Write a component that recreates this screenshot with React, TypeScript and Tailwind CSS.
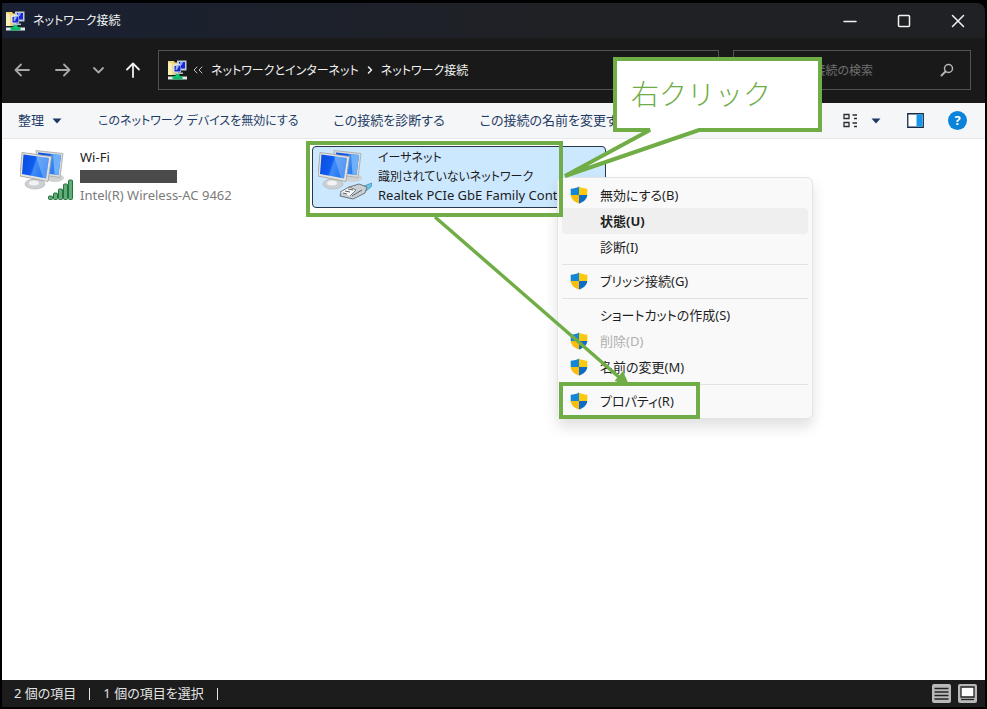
import React from "react";

function NetworkFolderIcon() {
  return (
    <svg width="19" height="20" viewBox="0 0 19 20" aria-hidden="true" className="shrink-0">
      <path d="M0 1h6l1 1.500h3V15H0z" fill="#f0d878" />
      <path d="M0 2.500l4 1V15H0z" fill="#fbf0b4" />
      <path d="M9 .5h9.500v10H9z" fill="#c3cbd8" />
      <path d="M11 2h6v6.500h-6z" fill="#1626d8" />
      <path d="M5 4.500l8-1v9H5z" fill="#dfe4ec" />
      <path d="M6.500 6l6-.5v6h-6z" fill="#1424c8" />
      <path d="M8 6h3l-2 4H7.500z" fill="#8fb2ff" />
      <path d="M12 2l3 0-1 3h-2z" fill="#7ea2ff" />
      <path d="M6 12.500h9V14H6z" fill="#b8bec8" />
      <path d="M0 16.500h19v3H0z" fill="#e6e9ec" />
      <path d="M4.500 16h10v3.500h-10z" fill="#12b76a" />
      <path d="M7.500 14h4v3h-4z" fill="#12c873" />
    </svg>
  );
}

function Shield() {
  return (
    <svg width="18" height="18" viewBox="0 0 18 18" aria-hidden="true" className="shrink-0">
      <path d="M9 .5C6.800 2 4 2.600.7 2.700V9H9z" fill="#1187d6" />
      <path d="M9 .5c2.200 1.500 5 2.100 8.300 2.200V9H9z" fill="#fdc90f" />
      <path d="M.7 9c.3 4.200 3.600 6.800 8.300 8.600V9z" fill="#fbbd0c" />
      <path d="M17.300 9c-.3 4.200-3.600 6.800-8.300 8.600V9z" fill="#0f6cc4" />
    </svg>
  );
}

function Monitors({ kind }: { kind: "wifi" | "ethernet" }) {
  const id = "screen-" + kind;
  return (
    <svg width="54" height="54" viewBox="0 0 54 54" aria-hidden="true" className="shrink-0">
      <defs>
        <linearGradient id={id} x1="0" y1="0" x2="1" y2="0.3">
          <stop offset="0" stopColor="#0a4be0" />
          <stop offset="0.5" stopColor="#0f5cf0" />
          <stop offset="0.58" stopColor="#3f8cf8" />
          <stop offset="1" stopColor="#1f74f0" />
        </linearGradient>
      </defs>
      <ellipse cx="35" cy="28" rx="9" ry="4" fill="#cfd1d3" />
      <path d="M16 .5l27 3-3 24-22-3z" fill="#d9dcdb" stroke="#a5a7a3" strokeWidth="0.800" />
      <path d="M18 2.500l23 2.500-2.500 20-18-2z" fill={"url(#" + id + ")"} />
      <path d="M33 4.200l8 .8-2.500 20-4-.5z" fill="#6fb0fa" />
      <path d="M12 27l9 2v6h-8z" fill="#b4b7b9" />
      <ellipse cx="15" cy="34" rx="10" ry="5" fill="#cdd0d2" stroke="#aeb1b3" strokeWidth="0.600" />
      <ellipse cx="14" cy="33" rx="5" ry="2.500" fill="#f1f2f3" />
      <path d="M2 2.500l29.500 4L28 31.500 0 26z" fill="#e4e5e2" stroke="#9d9e99" strokeWidth="0.800" />
      <path d="M3.500 4.500L29 8l-3 20.500L2 24z" fill={"url(#" + id + ")"} />
      <path d="M16 6.200L29 8l-3 20.500-3-.6z" fill="#a9cffb" opacity="0.400" />
      {kind === "wifi" ? (
        <g fill="#5fae78" stroke="#26713f" strokeWidth="1">
          <rect x="28.500" y="46" width="4" height="3.500" rx="1" />
          <rect x="33.500" y="43" width="4" height="6.500" rx="1" />
          <rect x="38.500" y="39" width="4" height="10.500" rx="1" />
          <rect x="43.500" y="34" width="4" height="15.500" rx="1" />
          <rect x="48.500" y="30" width="4" height="19.500" rx="1" />
        </g>
      ) : (
        <g strokeLinejoin="round">
          <path d="M54 33l-8 3-2 3 4 2 6-5z" fill="#6cc4e6" stroke="#3d93b8" strokeWidth="0.800" />
          <path d="M31 37l10-3 8 3-2 6-12 6-13-3 1-4z" fill="#c9cfd3" stroke="#6d767c" strokeWidth="1" />
          <path d="M22 42l9-5 7 3-6 6" fill="#f5f6f7" stroke="#6d767c" strokeWidth="0.900" />
          <path d="M25 43l4 1m-2-3l5 1m-2-3l5 1m-1 6l10-6" stroke="#5b646a" strokeWidth="1" fill="none" />
        </g>
      )}
    </svg>
  );
}

const strokeIcon = {
  fill: "none",
  stroke: "currentColor",
  strokeWidth: 1.5,
  strokeLinecap: "round" as const,
  strokeLinejoin: "round" as const,
};

function NavButton({ label, d, bright }: { label: string; d: string; bright?: boolean }) {
  return (
    <button aria-label={label} className={bright ? "text-[#f0f0f0]" : "text-[#a8a8a8]"}>
      <svg width="16" height="16" viewBox="0 0 16 16" {...strokeIcon} strokeWidth={1.8}>
        <path d={d} />
      </svg>
    </button>
  );
}

function Caret() {
  return (
    <svg width="10" height="6" viewBox="0 0 10 6" aria-hidden="true">
      <path d="M.5.500h9L5 5.500z" fill="#1b3a63" />
    </svg>
  );
}

type MenuEntry = { label: string; shield?: boolean; bold?: boolean; disabled?: boolean } | "separator";

const menu: MenuEntry[] = [
  { label: "無効にする(B)", shield: true },
  { label: "状態(U)", bold: true },
  { label: "診断(I)" },
  "separator",
  { label: "ブリッジ接続(G)", shield: true },
  "separator",
  { label: "ショートカットの作成(S)" },
  { label: "削除(D)", shield: true, disabled: true },
  { label: "名前の変更(M)", shield: true },
  "separator",
  { label: "プロパティ(R)", shield: true },
];

function ContextMenu() {
  return (
    <div
      role="menu"
      className="absolute left-[557px] top-[177px] w-64 rounded-md border border-[#e4e4e4] bg-[#f9f9f9] p-1 shadow-[0_8px_14px_rgba(0,0,0,0.12)]"
    >
      {menu.map((entry, i) =>
        entry === "separator" ? (
          <div key={i} role="separator" className="flex h-2 items-center">
            <div className="h-px w-full bg-[#e2e2e2]" />
          </div>
        ) : (
          <button
            key={i}
            role="menuitem"
            disabled={entry.disabled}
            className={
              "flex h-[26px] w-full items-center rounded pl-2 text-left " +
              (entry.bold ? "bg-[#efefef] font-bold " : "") +
              (entry.disabled ? "text-[#b0b0b0]" : "text-[#1f1f1f]")
            }
          >
            <span className="w-[30px]">{entry.shield && <Shield />}</span>
            {entry.label}
          </button>
        )
      )}
    </div>
  );
}

function Annotations() {
  return (
    <div className="pointer-events-none absolute left-0 top-0 h-full w-full">
      <div className="absolute left-[306px] top-[141px] h-[76px] w-[257px] border-4 border-[#70ad47]" />
      <div className="absolute left-[559px] top-[382px] h-[37px] w-[141px] border-4 border-[#70ad47]" />
      <svg width="987" height="709" viewBox="0 0 987 709" className="absolute left-0 top-0" aria-hidden="true">
        <path
          d="M615 59H820V130H699L565 176L650 130H615z"
          fill="#fff"
          stroke="#70ad47"
          strokeWidth="4"
        />
        <path d="M435 217L620 378" stroke="#70ad47" strokeWidth="3.500" />
        <path d="M629 385L614.500 381L623 371z" fill="#70ad47" />
      </svg>
      <p className="absolute left-[631px] top-[74px] text-[28px] font-light leading-10 text-[#70ad47] [font-feature-settings:normal]">
        右クリック
      </p>
    </div>
  );
}

export default function App() {
  return (
    <div className="relative flex h-screen w-full flex-col overflow-hidden border-2 border-t-3 border-black bg-black font-['Noto_Sans','Noto_Sans_CJK_JP',sans-serif] text-[13px] leading-[19px] [font-feature-settings:'palt']">
      <header className="flex h-[35px] shrink-0 items-center rounded-tr-lg bg-linear-to-r from-[#192032] to-[#202124] to-60% pl-1 text-[#f2f2f2]">
        <NetworkFolderIcon />
        <h1 className="ml-2 flex-1 text-[12px]">ネットワーク接続</h1>
        <div className="flex items-center gap-10 pr-5">
          <button aria-label="最小化">
            <svg width="14" height="14" viewBox="0 0 14 14" {...strokeIcon}>
              <path d="M1 7.500h12" />
            </svg>
          </button>
          <button aria-label="最大化">
            <svg width="14" height="14" viewBox="0 0 14 14" {...strokeIcon}>
              <rect x="1.500" y="1.500" width="11" height="11" rx="1" />
            </svg>
          </button>
          <button aria-label="閉じる">
            <svg width="14" height="14" viewBox="0 0 14 14" {...strokeIcon}>
              <path d="M1.500 1.500l11 11M12.500 1.500l-11 11" />
            </svg>
          </button>
        </div>
      </header>

      <nav className="flex h-[65px] shrink-0 items-center bg-[#191919] pb-px pl-3 pr-[14px] text-[12px] text-[#f0f0f0]">
        <div className="flex w-36 items-center">
          <div className="flex w-[41px]"><NavButton label="戻る" d="M15 8H1.500M7 2.500L1.500 8 7 13.500" /></div>
          <div className="flex w-[35px]"><NavButton label="進む" d="M1 8h13.500M9 2.500L14.500 8 9 13.500" /></div>
          <div className="flex w-[35px]"><NavButton label="最近の場所" d="M4 6l4.500 4.500L13 6" /></div>
          <NavButton label="上へ" d="M8 15V1.500M2 7.500l6-6 6 6" bright />
        </div>
        <div className="flex h-10 flex-1 items-center border border-[#535353] pl-[9px]">
          <NetworkFolderIcon />
          <svg width="10" height="8" viewBox="0 0 10 8" {...strokeIcon} strokeWidth={1} className="ml-[6px] text-[#c0c0c0]" aria-hidden="true">
            <path d="M4 1L1 4l3 3M9 1L6 4l3 3" />
          </svg>
          <button className="ml-2">ネットワークとインターネット</button>
          <svg width="6" height="8" viewBox="0 0 6 8" {...strokeIcon} className="mx-2" aria-hidden="true">
            <path d="M1.500 1l3 3-3 3" />
          </svg>
          <button>ネットワーク接続</button>
        </div>
        <label className="ml-[14px] flex h-10 w-[238px] items-center border border-[#535353] pl-4 pr-4">
          <input
            type="search"
            aria-label="検索"
            placeholder="ネットワーク接続の検索"
            className="w-0 flex-1 bg-transparent outline-none placeholder:text-[#6f6f6f]"
          />
          <svg width="14" height="14" viewBox="0 0 14 14" {...strokeIcon} className="text-[#b4b4b4]" aria-hidden="true">
            <circle cx="8.500" cy="5.500" r="4" />
            <path d="M5.500 8.500L1.500 12.500" strokeWidth="2" />
          </svg>
        </label>
      </nav>

      <div className="flex h-9 shrink-0 items-center border-b border-[#e6e8eb] bg-[#f5f6f8] pl-4 pr-[18px] text-[#1f3c66]">
        <button className="flex items-center gap-2">
          整理
          <Caret />
        </button>
        <div className="ml-9 flex flex-1 gap-[35px] whitespace-nowrap">
          <button className="text-[12px]">このネットワーク デバイスを無効にする</button>
          <button>この接続を診断する</button>
          <button>この接続の名前を変更する</button>
        </div>
        <button aria-label="表示" className="flex items-center gap-[13px]">
          <svg width="15" height="15" viewBox="0 0 15 15" fill="none" stroke="#2c2c2c" strokeWidth="1.300" aria-hidden="true">
            <path d="M1 1.500h5v4H1zM1 9.500h5v4H1zM9.500 2H14M11 5.500h3M9.500 10H14M11 13.500h3" />
          </svg>
          <Caret />
        </button>
        <button aria-label="プレビュー" className="ml-[26px]">
          <svg width="17" height="15" viewBox="0 0 17 15">
            <path d="M.75.750h15.500v13.500H.75z" fill="#fff" stroke="#152a48" strokeWidth="1.300" />
            <path d="M9.500 1.500h6v12h-6z" fill="#1596ec" />
          </svg>
        </button>
        <button
          aria-label="ヘルプ"
          className="ml-6 size-[19px] rounded-full bg-[#0b83da] text-center font-bold text-white"
        >
          ?
        </button>
      </div>

      <main className="grid flex-1 grid-cols-[294px_294px] content-start gap-1 bg-white pl-3 pt-[7px] text-[#1c1c1c]">
        <article className="flex h-[62px] border border-transparent pl-[5px] pt-[3px]">
          <Monitors kind="wifi" />
          <div className="ml-[6px] -mt-0.5 min-w-0">
            <h2>Wi-Fi</h2>
            <div className="flex h-[19px] items-center">
              <div className="h-[13px] w-[97px] bg-[#4b4b4b]" />
            </div>
            <p className="text-[#7b7b7b]">Intel(R) Wireless-AC 9462</p>
          </div>
        </article>
        <article className="flex h-[62px] rounded-sm border border-[#26374a] bg-[#cce8ff] pl-[5px] pt-[3px]">
          <Monitors kind="ethernet" />
          <div className="ml-[6px] -mt-0.5 min-w-0 whitespace-nowrap">
            <h2 className="text-[12px] leading-[19px]">イーサネット</h2>
            <p className="text-[12px] leading-[19px]">識別されていないネットワーク</p>
            <p className="truncate">Realtek PCIe GbE Family Controller</p>
          </div>
        </article>
      </main>

      <footer className="flex h-[27px] shrink-0 items-center bg-[#1c1c1c] pl-3 pr-2 text-[#e4e4e4]">
        <span>2 個の項目</span>
        <div className="mx-[13px] h-3 w-px bg-[#e4e4e4]" />
        <span>1 個の項目を選択</span>
        <div className="ml-[13px] h-3 w-px bg-[#e4e4e4]" />
        <div className="ml-auto flex gap-[7px]">
          <button aria-label="詳細">
            <svg width="19" height="19" viewBox="0 0 19 19">
              <rect width="19" height="19" rx="2" fill="#b9b9b9" />
              <path d="M2.500 4.500h14M2.500 8h14M2.500 11.500h14M2.500 15h14" stroke="#222" strokeWidth="1.300" />
            </svg>
          </button>
          <button aria-label="大きいアイコン">
            <svg width="19" height="19" viewBox="0 0 19 19">
              <rect width="19" height="19" rx="2" fill="#b9b9b9" />
              <path d="M3 3h13v10H3z" fill="#fff" stroke="#222" strokeWidth="1.300" />
              <path d="M3 15.500h13" stroke="#222" strokeWidth="1.300" />
            </svg>
          </button>
        </div>
      </footer>

      <div className="absolute -left-[2px] -top-[3px] h-full w-full">
        <ContextMenu />
        <Annotations />
      </div>
    </div>
  );
}
